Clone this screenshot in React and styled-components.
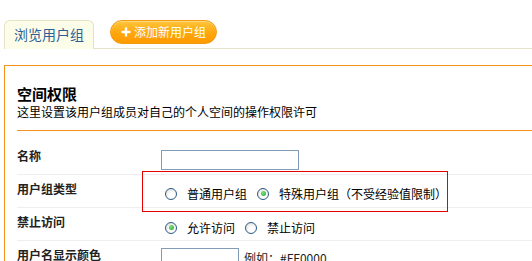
import React from "react";
import styled, { createGlobalStyle } from "styled-components";

const Global = createGlobalStyle`
  html, body { margin: 0; padding: 0; background: #fff; overflow: hidden; }
  body { font-family: "Noto Sans CJK SC", "Liberation Sans", sans-serif; font-size: 12px; color: #000; }
`;

const Page = styled.div`
  position: relative;
  padding: 20px 0 0 4px;
  width: 528px;
  height: 241px;
  overflow: hidden;
`;

const TabBar = styled.div`
  display: flex;
  align-items: flex-start;
  height: 28px;
  border-bottom: 1px solid #e6e3cb;
`;

const Tab = styled.div`
  box-sizing: border-box;
  width: 90px;
  height: 29px;
  border: 1px solid #e6e2c4;
  border-bottom: none;
  border-radius: 6px 6px 0 0;
  background: #fcfde9;
  color: #2c5f97;
  font-size: 14px;
  line-height: 27px;
  text-align: center;
`;

const AddButton = styled.div`
  box-sizing: border-box;
  margin-left: 16px;
  width: 107px;
  height: 24px;
  border-radius: 12px;
  border: 1px solid #f29a12;
  background: linear-gradient(#ffc63c, #ffa60c 55%, #ff9a00);
  box-shadow: inset 0 1px 0 rgba(255, 255, 255, 0.35);
  display: flex;
  align-items: center;
  padding-left: 10px;
  gap: 3px;
  color: #fff;
  font-size: 12px;
  line-height: 22px;
`;

const Panel = styled.div`
  margin-top: 16px;
  border-top: 1px solid #f7921e;
  border-left: 1px solid #f7921e;
  padding-left: 12px;
`;

const Head = styled.div`
  padding-top: 18px;
  padding-bottom: 10px;
  border-bottom: 1px solid #f7921e;
`;

const Title = styled.div`
  font-size: 15px;
  font-weight: bold;
  line-height: 20px;
  color: #000;
`;

const Desc = styled.div`
  font-size: 12px;
  line-height: 16px;
  color: #000;
`;

const Rows = styled.div`
  margin-top: 11px;
`;

const Row = styled.div`
  display: grid;
  grid-template-columns: 144px 1fr;
  align-items: ${(p) => (p.$top ? "start" : "center")};
  height: 32px;
  border-bottom: 1px solid #eeeeee;
  padding-top: ${(p) => (p.$top ? "7px" : "0")};
  box-sizing: content-box;
`;

const Label = styled.div`
  font-weight: bold;
  font-size: 12px;
  line-height: 14px;
  color: #222;
  padding-bottom: ${(p) => (p.$top ? "0" : "4px")};
`;

const Value = styled.div`
  display: flex;
  align-items: center;
  padding-left: ${(p) => (p.$pad ? "4px" : "0")};
  padding-top: ${(p) => (p.$shift || 0)}px;
  font-size: 12px;
  line-height: 14px;
  color: #000;
`;

const TextInput = styled.div`
  box-sizing: border-box;
  width: ${(p) => p.$w}px;
  height: 20px;
  border: 1px solid #7f9db9;
  background: #fff;
`;

const Option = styled.label`
  display: flex;
  align-items: center;
  margin-right: 10px;
`;

const Radio = styled.span`
  box-sizing: border-box;
  width: 12px;
  height: 12px;
  margin-right: 10px;
  border-radius: 50%;
  border: 1px solid #2b5a88;
  background: radial-gradient(circle at 60% 65%, #ffffff 30%, #e6e5dd 75%, #d2d1c8 100%);
  display: flex;
  align-items: center;
  justify-content: center;
  &::after {
    content: "";
    width: 5px;
    height: 5px;
    border-radius: 50%;
    background: ${(p) => (p.$on ? "radial-gradient(circle at 40% 35%, #7de37d, #22a322)" : "transparent")};
  }
`;

const Hint = styled.span`
  margin-left: 5px;
  color: #222;
`;

const Annotation = styled.div`
  position: absolute;
  left: 142px;
  top: 171px;
  width: 306px;
  height: 41px;
  box-sizing: border-box;
  border: 1px solid #e60000;
  pointer-events: none;
`;

const Plus = () => (
  <svg width="10" height="10" viewBox="0 0 10 10">
    <rect x="3.8" y="0.5" width="2.4" height="9" fill="#fff" />
    <rect x="0.5" y="3.8" width="9" height="2.4" fill="#fff" />
  </svg>
);

export default function App() {
  return (
    <>
      <Global />
      <Page>
        <TabBar>
          <Tab>浏览用户组</Tab>
          <AddButton>
            <Plus />
            <span>添加新用户组</span>
          </AddButton>
        </TabBar>
        <Panel>
          <Head>
            <Title>空间权限</Title>
            <Desc>这里设置该用户组成员对自己的个人空间的操作权限许可</Desc>
          </Head>
          <Rows>
            <Row>
              <Label>名称</Label>
              <Value $shift={3}>
                <TextInput $w={138} />
              </Value>
            </Row>
            <Row>
              <Label>用户组类型</Label>
              <Value $pad $shift={5}>
                <Option>
                  <Radio />
                  普通用户组
                </Option>
                <Option>
                  <Radio $on />
                  特殊用户组（不受经验值限制）
                </Option>
              </Value>
            </Row>
            <Row>
              <Label>禁止访问</Label>
              <Value $pad $shift={7}>
                <Option>
                  <Radio $on />
                  允许访问
                </Option>
                <Option>
                  <Radio />
                  禁止访问
                </Option>
              </Value>
            </Row>
            <Row $top>
              <Label $top>用户名显示颜色</Label>
              <Value>
                <TextInput $w={78} />
                <Hint>例如：#FF0000</Hint>
              </Value>
            </Row>
          </Rows>
        </Panel>
        <Annotation />
      </Page>
    </>
  );
}
